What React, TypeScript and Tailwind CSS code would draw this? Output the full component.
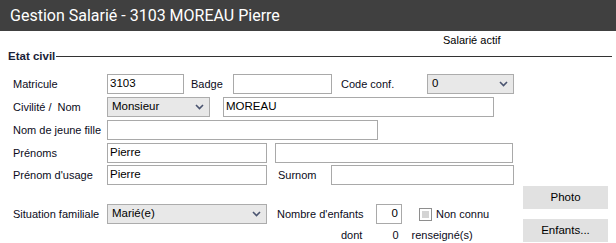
import React from 'react';

const Chevron = () => (
  <svg width="9" height="6" viewBox="0 0 9 6" className="shrink-0">
    <polyline points="1,1 4.5,4.5 8,1" fill="none" stroke="#4a5470" strokeWidth="1.6" />
  </svg>
);

const Field = ({ w, value = '', right = false }: { w: string; value?: string; right?: boolean }) => (
  <div
    className={`${w} h-[20px] shrink-0 border border-[#a9a9a9] bg-white flex items-center px-[2px] text-[11.5px] text-black ${
      right ? 'justify-end pr-[3px]' : ''
    }`}
  >
    {value}
  </div>
);

const Select = ({ w, value }: { w: string; value: string }) => (
  <div className={`${w} h-[20px] shrink-0 border border-[#acacac] bg-[#e8e8e8] flex items-center justify-between pl-[4px] pr-[5px] text-[11.5px] text-black`}>
    <span>{value}</span>
    <Chevron />
  </div>
);

const Label = ({ w, children, className = '' }: { w: string; children: React.ReactNode; className?: string }) => (
  <div className={`${w} shrink-0 text-[11px] text-[#0b0b1a] ${className}`}>{children}</div>
);

export default function App() {
  return (
    <div className="w-[616px] h-[243px] bg-white overflow-hidden" style={{ fontFamily: '"Liberation Sans", Arial, sans-serif' }}>
      <div className="h-[31px] bg-[#404040] flex items-center pl-[10px] text-white text-[16px]" style={{ fontFamily: 'Roboto, "Liberation Sans", sans-serif' }}>
        Gestion Salarié - 3103 MOREAU Pierre
      </div>

      <div className="h-[17px] flex items-end pl-[443px] text-[11px] text-black">Salarié actif</div>

      <div className="flex items-center h-[17px] pl-[8px] pr-[4px]">
        <span className="text-[11.5px] font-bold text-[#1a2238]">Etat civil</span>
        <div className="flex-1 h-px bg-[#333] ml-[1px]" />
      </div>

      <div className="flex mt-[9px]">
        <div className="w-[523px] pl-[13px] flex flex-col">
          <div className="flex items-center h-[20px]">
            <Label w="w-[94px]">Matricule</Label>
            <Field w="w-[77px]" value="3103" />
            <Label w="w-[42px]" className="ml-[7px]">Badge</Label>
            <Field w="w-[99px]" />
            <Label w="w-[86px]" className="ml-[9px]">Code conf.</Label>
            <Select w="w-[87px]" value="0" />
          </div>

          <div className="flex items-center h-[20px] mt-[3px]">
            <Label w="w-[94px]">
              <span>Civilité /</span>
              <span className="ml-[6px]">Nom</span>
            </Label>
            <Select w="w-[103px]" value="Monsieur" />
            <div className="ml-[13px]">
              <Field w="w-[271px]" value="MOREAU" />
            </div>
          </div>

          <div className="flex items-center h-[20px] mt-[3px]">
            <Label w="w-[94px]">Nom de jeune fille</Label>
            <Field w="w-[271px]" />
          </div>

          <div className="flex items-center h-[20px] mt-[3px]">
            <Label w="w-[94px]">Prénoms</Label>
            <Field w="w-[160px]" value="Pierre" />
            <div className="ml-[8px]">
              <Field w="w-[238px]" />
            </div>
          </div>

          <div className="flex items-center h-[20px] mt-[2px]">
            <Label w="w-[94px]">Prénom d'usage</Label>
            <Field w="w-[160px]" value="Pierre" />
            <Label w="w-[53px]" className="ml-[11px]">Surnom</Label>
            <Field w="w-[183px]" />
          </div>

          <div className="flex items-center h-[20px] mt-[19px]">
            <Label w="w-[94px]">Situation familiale</Label>
            <Select w="w-[160px]" value="Marié(e)" />
            <Label w="w-[99px]" className="ml-[10px]">Nombre d'enfants</Label>
            <Field w="w-[26px]" value="0" right />
            <div className="ml-[17px] w-[13px] h-[13px] border border-[#8e8e8e] bg-white p-[2px] shrink-0">
              <div className="w-full h-full bg-[#d4d4d4]" />
            </div>
            <Label w="w-auto" className="ml-[4px]">Non connu</Label>
          </div>

          <div className="flex items-center h-[16px] mt-[3px] text-[11px] text-[#0b0b1a]">
            <span className="ml-[328px]">dont</span>
            <span className="ml-[30px]">0</span>
            <span className="ml-[13px]">renseigné(s)</span>
          </div>
        </div>

        <div className="w-[85px] flex flex-col gap-[10px] pt-[112px]">
          <div className="h-[23px] bg-[#e1e1e1] flex items-center justify-center text-[11.5px] text-black">Photo</div>
          <div className="h-[23px] bg-[#e1e1e1] flex items-center justify-center text-[11.5px] text-black">Enfants...</div>
        </div>
      </div>
    </div>
  );
}
